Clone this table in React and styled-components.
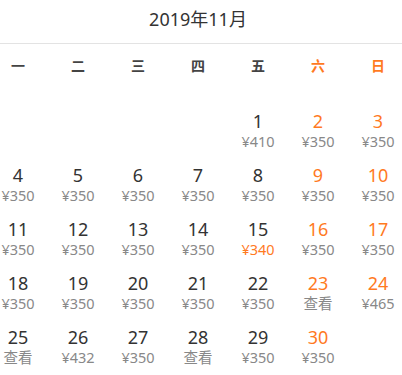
import React from "react";
import styled, { createGlobalStyle } from "styled-components";

const GlobalStyle = createGlobalStyle`
  body {
    margin: 0;
    background: #ffffff;
    font-family: "Noto Sans", "Noto Sans CJK SC", sans-serif;
  }
`;

const ORANGE = "#ff7a1f";

const WEEKDAYS = ["一", "二", "三", "四", "五", "六", "日"];

// price per day; "查看" when no price is shown
const PRICES = {
  1: "¥410", 2: "¥350", 3: "¥350", 4: "¥350", 5: "¥350", 6: "¥350",
  7: "¥350", 8: "¥350", 9: "¥350", 10: "¥350", 11: "¥350", 12: "¥350",
  13: "¥350", 14: "¥350", 15: "¥340", 16: "¥350", 17: "¥350", 18: "¥350",
  19: "¥350", 20: "¥350", 21: "¥350", 22: "¥350", 23: "查看", 24: "¥465",
  25: "查看", 26: "¥432", 27: "¥350", 28: "查看", 29: "¥350", 30: "¥350",
};

const LOWEST = 15;
const FIRST_OFFSET = 4; // Nov 1st 2019 is a Friday

const Page = styled.div`
  width: 402px;
  height: 375px;
  overflow: hidden;
`;

const Header = styled.div`
  height: 44px;
  border-bottom: 1px solid #e3e3e3;
  box-sizing: border-box;
  width: 100%;
`;

const Title = styled.div`
  width: 396px;
  text-align: center;
  font-size: 18px;
  line-height: 38px;
  color: #333333;
`;

const Grid = styled.div`
  display: grid;
  grid-template-columns: repeat(7, 36px);
  column-gap: 24px;
  width: 396px;
`;

const WeekRow = styled(Grid)`
  height: 41px;
  align-items: center;
`;

const WeekDay = styled.div`
  text-align: center;
  font-size: 14px;
  font-weight: bold;
  color: ${p => (p.$weekend ? ORANGE : "#444444")};
`;

const Days = styled(Grid)`
  padding-top: 19px;
`;

const Cell = styled.div`
  height: 54px;
  display: flex;
  flex-direction: column;
  align-items: center;
  justify-content: center;
  white-space: nowrap;
`;

const DayNum = styled.div`
  font-size: 18px;
  line-height: 20px;
  color: ${p => (p.$weekend ? ORANGE : "#333333")};
`;

const Price = styled.div`
  font-size: 14.5px;
  line-height: 20px;
  color: ${p => (p.$low ? ORANGE : "#888888")};
`;

export default function App() {
  const cells = [];
  for (let i = 0; i < FIRST_OFFSET; i++) cells.push(<Cell key={"e" + i} />);
  for (let d = 1; d <= 30; d++) {
    const col = (FIRST_OFFSET + d - 1) % 7;
    cells.push(
      <Cell key={d}>
        <DayNum $weekend={col >= 5}>{d}</DayNum>
        <Price $low={d === LOWEST}>{PRICES[d]}</Price>
      </Cell>
    );
  }

  return (
    <Page>
      <GlobalStyle />
      <Header>
        <Title>2019年11月</Title>
      </Header>
      <WeekRow>
        {WEEKDAYS.map((w, i) => (
          <WeekDay key={w} $weekend={i >= 5}>
            {w}
          </WeekDay>
        ))}
      </WeekRow>
      <Days>{cells}</Days>
    </Page>
  );
}
